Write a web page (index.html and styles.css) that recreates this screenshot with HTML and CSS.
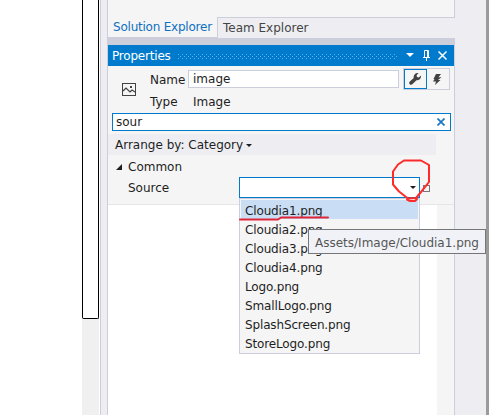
FILE: index.html
```html
<!DOCTYPE html>
<html lang="en">
<head>
<meta charset="utf-8">
<title>Properties</title>
<link rel="stylesheet" href="styles.css">
</head>
<body>
<div class="window">
  <div class="editor"></div>
  <div class="scroll"><div class="thumb"></div></div>
  <div class="splitter"></div>
  <main class="dock">
    <div class="explorer"></div>
    <nav class="tabs"><span class="tab active"><span class="t-sol">Solution Explorer</span></span><span class="tab"><span class="t-team">Team Explorer</span></span></nav>
    <div class="gap"></div>
    <header class="title">
      <span class="t-prop">Properties</span>
      <svg class="grip" width="220" height="5" viewBox="0 0 220 5"><defs><pattern id="dots" width="4" height="4" patternUnits="userSpaceOnUse"><path d="M0 0h1v1H0zM2 2h1v1H2z" fill="#62b2e8"/></pattern></defs><rect width="220" height="5" fill="url(#dots)"/></svg>
      <svg class="actions" width="44" height="13" viewBox="0 0 44 13" fill="none" stroke="#fff"><path d="M0 4h8L4 8z" fill="#fff" stroke="none"/><path d="M18.500 8V1.500h4V8M17 8.500h7M20.500 9v3M21.500 2v6"/><path d="m32.500 2.500 8 8m0-8-8 8" stroke-width="1.500"/></svg>
    </header>
    <section class="body">
      <div class="ident">
        <svg class="pic" width="14" height="13" viewBox="0 0 14 13" fill="none" stroke="#424242"><rect x=".5" y=".5" width="13" height="12"/><path d="m1 8 3-3 4 4 2-2 3 2" stroke-width="1.200"/><path d="M8 3h2v2H8z" fill="#424242" stroke="none"/></svg>
        <div class="fields">
          <label class="t-name">Name</label><div class="name"><span>image</span></div>
          <label class="t-type">Type</label><div class="type"><span>Image</span></div>
        </div>
        <div class="modes">
          <span class="mode on"><svg width="12" height="12" viewBox="0 0 12 12"><path d="M9.500 0 7.600 2.200 8 4 9.800 4.400 12 2.600c.2 2.900-1.600 5-4.500 4.700L3.300 11.300C1.600 12.700-.7 10.700.6 8.800L4.700 5C4.200 2 6.500-.5 9.500 0z" fill="#424242"/></svg></span>
          <span class="mode"><svg width="9" height="11" viewBox="0 0 9 11"><path d="M3 0h5L5.500 3.200H8.500L5 6h2.500L2 11 3 7.500H0L1.500 5H.5z" fill="#424242"/></svg></span>
        </div>
      </div>
      <div class="search"><span>sour</span><svg width="8" height="8" viewBox="0 0 8 8"><path d="m.5.5 7 7m0-7-7 7" stroke="#1577c5" stroke-width="1.700"/></svg></div>
      <div class="arrange"><span>Arrange by: Category</span><svg width="6" height="3" viewBox="0 0 6 3"><path d="M0 0h6L3 3z" fill="#1e1e1e"/></svg></div>
      <div class="group"><svg width="6" height="6" viewBox="0 0 6 6"><path d="M6 0v6H0z" fill="#1e1e1e"/></svg><span>Common</span></div>
      <div class="prop"><span class="t-src">Source</span><div class="combo"><svg width="6" height="3" viewBox="0 0 6 3"><path d="M0 0h6L3 3z" fill="#1e1e1e"/></svg></div><i class="marker"></i></div>
    </section>
    <div class="rest"></div>
    <div class="menu">
      <div class="item sel"><span>Cloudia1.png</span></div>
      <div class="item"><span>Cloudia2.png</span></div>
      <div class="item"><span>Cloudia3.png</span></div>
      <div class="item"><span>Cloudia4.png</span></div>
      <div class="item"><span>Logo.png</span></div>
      <div class="item"><span>SmallLogo.png</span></div>
      <div class="item"><span>SplashScreen.png</span></div>
      <div class="item"><span>StoreLogo.png</span></div>
    </div>
  </main>
  <div class="margin"></div>
  <div class="edge"></div>
  <svg class="ink" width="489" height="415" fill="none" stroke="#ff2a2a" stroke-width="2" stroke-linejoin="round" stroke-linecap="round"><path d="m404 160.500-6 4-5 7v13l6 7 9 7 8-.5 5-6 8-10V165l-8-4.500z"/><path d="m407 199.500 3 1.500h5l2-2"/><path d="M240 219.500h38l3-2h47" stroke="#e0263a"/></svg>
  <div class="tooltip"><span>Assets/Image/Cloudia1.png</span></div>
</div>
</body>
</html>
```
FILE: styles.css
```css
* { box-sizing: border-box; }
body { margin: 0; overflow: hidden; font: 12px/18px "DejaVu Sans", Verdana, sans-serif; color: #1e1e1e; }
svg { display: block; flex: none; }
span { white-space: nowrap; }
.window { position: relative; display: flex; width: 489px; height: 415px; background: #eeeef2; }
.editor { width: 82px; background: #fff; }
.scroll { width: 18px; background: #f0f0f0; border-right: 1px solid #fff; }
.thumb { width: 17px; height: 319px; border: 1px solid #000; border-top: 0; border-radius: 0 0 2px 2px; background: #fff; }
.splitter { width: 7px; border-left: 1px solid #cccedb; }
.dock { position: relative; width: 348px; display: flex; flex-direction: column; border: solid #cccedb; border-width: 0 1px; }
.explorer { height: 17px; background: #f5f5f5; }
.tabs { display: flex; height: 21px; margin: 0 -1px; background: #eeeef2; }
.tab { flex: 1; padding: 1px 0 0 5px; color: #444; border-top: 1px solid #cccedb; }
.tab.active { flex: 0 0 111px; padding: 1px 0 0 5px; border: solid #cccedb; border-width: 0 1px 1px 1px; background: #f5f5f5; color: #0e70c0; }
.t-sol { letter-spacing: -.22px; }
.gap { height: 7px; background: #cccedb; }
.title { display: flex; align-items: center; height: 21px; padding-left: 4px; background: #007acc; color: #fff; }
.t-prop { flex: 0 0 66px; letter-spacing: -.2px; }
.grip { margin-top: 1px; }
.actions { margin-left: 8px; }
.body { height: 139px; background: #f5f5f5; border-bottom: 1px solid #e6e6e9; }
.ident { display: flex; height: 47px; }
.pic { margin: 17px 14px 0 14px; }
.fields { display: grid; grid-template-columns: 38px 211px; grid-template-rows: 18px 18px; row-gap: 4px; padding-top: 4px; }
.t-name { padding-top: 1px; }
.t-type { padding-top: 1px; }
.name { height: 18px; padding-left: 4px; line-height: 17px; border: 1px solid #cccedb; background: #fff; }
.type { padding: 1px 0 0 5px; }
.modes { display: flex; height: 22px; margin: 2px 0 0 4px; border: 1px solid #cccedb; width: 47px; }
.mode { display: flex; width: 23px; align-items: center; justify-content: center; }
.mode.on { border: 1px solid #007acc; }
.search { display: flex; align-items: center; justify-content: space-between; width: 339px; height: 18px; margin-left: 4px; padding: 0 5px 0 3px; border: 1px solid #007acc; background: #fff; }
.arrange { display: flex; align-items: center; gap: 5px; width: 328px; height: 21px; margin-top: 3px; padding: 1px 0 0 7px; background: #eeeef2; }
.arrange svg { margin-left: -2px; }
.group { display: flex; align-items: center; gap: 6px; height: 22px; padding: 1px 0 0 8px; }
.prop { display: flex; height: 21px; padding-left: 20px; }
.t-src { flex: 0 0 111px; line-height: 23px; }
.combo { display: flex; align-items: center; justify-content: flex-end; flex: 0 0 181px; height: 21px; padding-right: 3px; border: 1px solid #007acc; background: #fff; }
.marker { width: 7px; height: 7px; margin: 8px 0 0 3px; border: 1px solid #777; }
.rest { flex: 1; background: #fff; border-right: 17px solid #f5f5f5; }
.menu { position: absolute; left: 131px; top: 198px; width: 181px; height: 156px; padding: 1px; border: 1px solid #cccedb; background: #f5f5f5; letter-spacing: -.14px; }
.item { height: 19px; padding-left: 4px; line-height: 22px; }
.item.sel { background: #c9def5; }
.margin { width: 31px; }
.edge { width: 3px; background: #9b9b9b; }
.ink { position: absolute; left: 0; top: 0; }
.tooltip { position: absolute; left: 308px; top: 229px; width: 178px; height: 25px; padding-left: 6px; line-height: 26px; color: #555; border: 1px solid #767676; background: #f1f2f7; }
```
